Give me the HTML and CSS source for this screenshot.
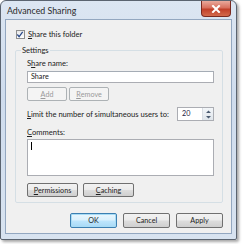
FILE: index.html
```html
<!DOCTYPE html>
<html>
<head>
<meta charset="utf-8">
<link rel="stylesheet" href="styles.css">
</head>
<body>
<div class="window">
  <div class="titlebar">
    <span class="title">Advanced Sharing</span>
    <span class="close"><svg width="10" height="8" viewBox="0 0 10 8"><path d="M2 1 L8 7 M8 1 L2 7" stroke="#fff" stroke-width="2" stroke-linecap="square"/></svg></span>
  </div>
  <div class="client">
    <label class="check-row"><span class="checkbox"><svg width="9" height="9" viewBox="0 0 9 9"><path d="M1.5 4.5 L3.5 7 L7.5 1.5" fill="none" stroke="#2b4a8a" stroke-width="1.4"/></svg></span><span><u>S</u>hare this folder</span></label>
    <fieldset class="group">
      <legend>Settings</legend>
      <div class="label">S<u>h</u>are name:</div>
      <div class="input">Share</div>
      <div class="btn-row">
        <span class="btn disabled small"><u>A</u>dd</span>
        <span class="btn disabled small"><u>R</u>emove</span>
      </div>
      <div class="limit-row">
        <span class="nowrap"><u>L</u>imit the number of simultaneous users to:</span>
        <span class="spin"><span class="spin-val">20</span><span class="spin-arrows"><svg width="7" height="11" viewBox="0 0 7 11"><path d="M3.5 1.5 L6 4 L1 4 Z M3.5 9.5 L6 7 L1 7 Z" fill="#4a5a70"/></svg></span></span>
      </div>
      <div class="label comments-label"><u>C</u>omments:</div>
      <div class="textarea"><span class="caret"></span></div>
      <div class="btn-row bottom">
        <span class="btn wide"><u>P</u>ermissions</span>
        <span class="btn wide"><u>C</u>aching</span>
      </div>
    </fieldset>
    <div class="footer">
      <span class="btn dlg default">OK</span>
      <span class="btn dlg">Cancel</span>
      <span class="btn dlg">Apply</span>
    </div>
  </div>
</div>
</body>
</html>
```

FILE: styles.css
```css
html, body {
  margin: 0;
  padding: 0;
  background: #ffffff;
}
body {
  font-family: "Lato", "Noto Sans", sans-serif;
  font-size: 7.6px;
  color: #222;
  width: 242px;
  height: 244px;
  overflow: hidden;
}
u { text-decoration: underline; text-underline-offset: 1px; }
.nowrap { white-space: nowrap; }
.window {
  width: 237px;
  height: 240px;
  box-sizing: border-box;
  border: 1px solid #5b6470;
  border-radius: 6px 6px 2px 2px;
  background: linear-gradient(180deg, #dce6f2 0%, #cfdced 40%, #d8e3f0 100%);
  box-shadow: 2px 2px 3px rgba(0,0,0,0.35);
  padding: 0 4px 5px 4px;
  display: flex;
  flex-direction: column;
}
.titlebar {
  height: 18px;
  display: flex;
  justify-content: space-between;
  align-items: flex-start;
}
.title {
  margin-top: 4px;
  margin-left: 2px;
  font-size: 8.8px;
  color: #2a2a2a;
}
.close {
  width: 30px;
  height: 16px;
  margin-right: 1px;
  box-sizing: border-box;
  border: 1px solid #7a2a20;
  border-top: none;
  border-radius: 0 0 4px 4px;
  background: linear-gradient(180deg, #e9a99c 0%, #d8705e 45%, #c1402a 55%, #d26a4c 100%);
  display: flex;
  align-items: center;
  justify-content: center;
}
.client {
  flex: 1;
  background: #f0f0f0;
  border: 1px solid #93a7c0;
  padding: 8px 8px 0 9px;
  display: flex;
  flex-direction: column;
}
.check-row {
  display: flex;
  align-items: center;
  gap: 3px;
  height: 12px;
  margin-left: 1px;
}
.checkbox {
  width: 9px;
  height: 9px;
  box-sizing: border-box;
  border: 1px solid #8f8f8f;
  background: linear-gradient(180deg, #e8e8e8, #ffffff);
  display: flex;
}
.checkbox svg { margin: -1px 0 0 -1px; }
.group {
  min-width: 0;
  margin: 5px 0 0 0;
  padding: 3px 8px 6px 11px;
  border: 1px solid #d5dfe5;
  border-radius: 2px;
  height: 158px;
  box-sizing: border-box;
}
.group legend {
  padding: 0 1px;
  margin-left: -6px;
}
.label { height: 11px; line-height: 11px; }
.input {
  margin-top: 2px;
  height: 12px;
  box-sizing: border-box;
  border: 1px solid #abadb3;
  border-top-color: #a5acb5;
  background: #fff;
  padding-left: 3px;
  line-height: 10px;
  font-size: 7.2px;
}
.btn-row {
  display: flex;
  gap: 2px;
  margin-top: 4px;
}
.btn {
  height: 14px;
  box-sizing: border-box;
  border: 1px solid #707070;
  border-radius: 2px;
  background: linear-gradient(180deg, #f2f2f2 0%, #ebebeb 48%, #dddddd 52%, #cfcfcf 100%);
  display: flex;
  align-items: center;
  justify-content: center;
  font-size: 7.2px;
  color: #1e1e1e;
}
.btn.small { width: 40px; }
.btn.disabled {
  border-color: #adb2b5;
  background: #f4f4f4;
  color: #9a9a9a;
}
.limit-row {
  display: flex;
  justify-content: space-between;
  align-items: center;
  margin-top: 6px;
  height: 14px;
}
.spin {
  width: 37px;
  height: 14px;
  box-sizing: border-box;
  border: 1px solid #abadb3;
  background: #fff;
  display: flex;
  justify-content: space-between;
  font-size: 7.2px;
}
.spin-val { padding-left: 4px; line-height: 12px; color: #1b1b40; }
.spin-arrows {
  width: 10px;
  border-left: 1px solid #d8dde3;
  background: linear-gradient(180deg, #f3f6f9, #dfe5eb);
  display: flex;
  align-items: center;
  justify-content: center;
}
.comments-label { margin-top: 6px; }
.textarea {
  margin-top: 1px;
  height: 37px;
  box-sizing: border-box;
  border: 1px solid #abadb3;
  background: #fff;
  padding: 2px 3px;
}
.caret {
  display: block;
  width: 1px;
  height: 8px;
  background: #000;
}
.btn-row.bottom { gap: 5px; margin-top: 7px; }
.btn.wide { width: 51px; }
.footer {
  display: flex;
  justify-content: flex-end;
  gap: 6px;
  margin-top: 10px;
  padding-right: 0;
}
.btn.dlg { width: 47px; height: 15px; }
.btn.default {
  border-color: #3c7fb1;
  box-shadow: inset 0 0 0 1px #a8dcf5;
  background: linear-gradient(180deg, #eaf6fd 0%, #d9f0fc 48%, #bee6fd 52%, #a7d9f5 100%);
}
```
